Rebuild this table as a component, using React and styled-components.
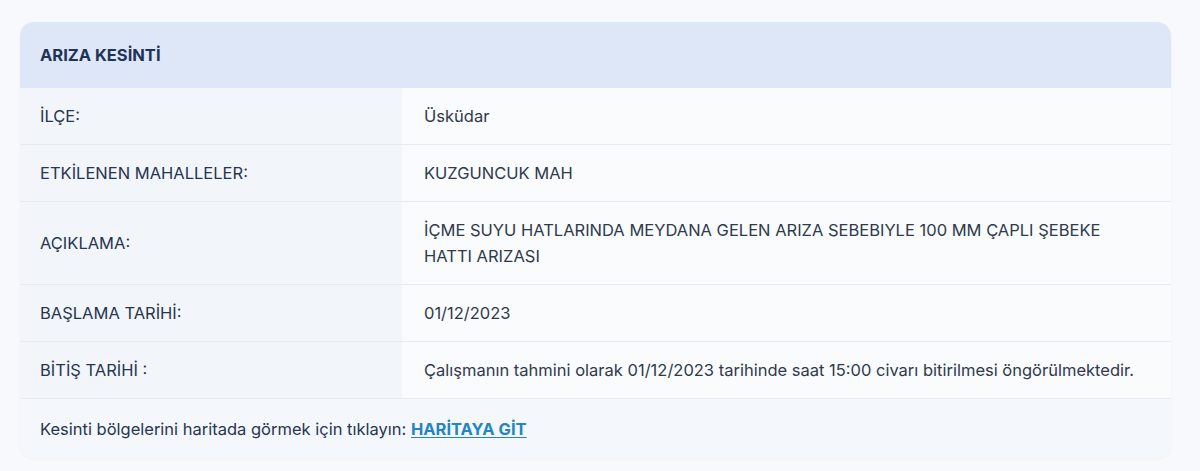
import React from 'react';
import styled, { createGlobalStyle } from 'styled-components';

const GlobalStyle = createGlobalStyle`
  body {
    margin: 0;
    background: #f7f9fc;
    font-family: Inter, "Noto Sans", sans-serif;
  }
  * {
    box-sizing: border-box;
  }
`;

const Page = styled.div`
  padding: 22px 29px 14px 20px;
`;

const Card = styled.div`
  background: #f9fbfd;
  border-radius: 14px;
  overflow: hidden;
  box-shadow: 0 1px 3px rgba(30, 50, 90, 0.04);
`;

const Header = styled.div`
  background: #dee7f7;
  color: #1f3358;
  font-size: 16.5px;
  font-weight: 700;
  line-height: 26px;
  padding: 20px 20px;
`;

const Row = styled.div`
  display: grid;
  grid-template-columns: 382px 1fr;
  border-bottom: 1px solid #e6eaf1;
  font-size: 16.5px;
  line-height: 26px;
`;

const Label = styled.div`
  background: #f2f5fa;
  color: #263650;
  padding: 15px 20px;
  display: flex;
  align-items: center;
`;

const Value = styled.div`
  background: #f9fbfd;
  color: #2f3a4b;
  padding: 15px 29px 15px 22px;
`;

const Footer = styled.div`
  background: #f4f7fb;
  color: #263650;
  font-size: 16.5px;
  line-height: 26px;
  padding: 17px 20px 16px;
`;

const MapLink = styled.a`
  color: #2385c6;
  font-weight: 700;
  text-decoration: underline;
  text-underline-offset: 2px;
  cursor: pointer;
`;

const rows = [
  ['İLÇE:', 'Üsküdar'],
  ['ETKİLENEN MAHALLELER:', 'KUZGUNCUK MAH'],
  ['AÇIKLAMA:', 'İÇME SUYU HATLARINDA MEYDANA GELEN ARIZA SEBEBIYLE 100 MM ÇAPLI ŞEBEKE HATTI ARIZASI'],
  ['BAŞLAMA TARİHİ:', '01/12/2023'],
  ['BİTİŞ TARİHİ :', 'Çalışmanın tahmini olarak 01/12/2023 tarihinde saat 15:00 civarı bitirilmesi öngörülmektedir.'],
];

const App = () => {
  return (
    <>
      <GlobalStyle />
      <Page>
        <Card>
          <Header>ARIZA KESİNTİ</Header>
          {rows.map(([label, value]) => (
            <Row key={label}>
              <Label>{label}</Label>
              <Value>{value}</Value>
            </Row>
          ))}
          <Footer>
            Kesinti bölgelerini haritada görmek için tıklayın: <MapLink>HARİTAYA GİT</MapLink>
          </Footer>
        </Card>
      </Page>
    </>
  );
};

export default App;
